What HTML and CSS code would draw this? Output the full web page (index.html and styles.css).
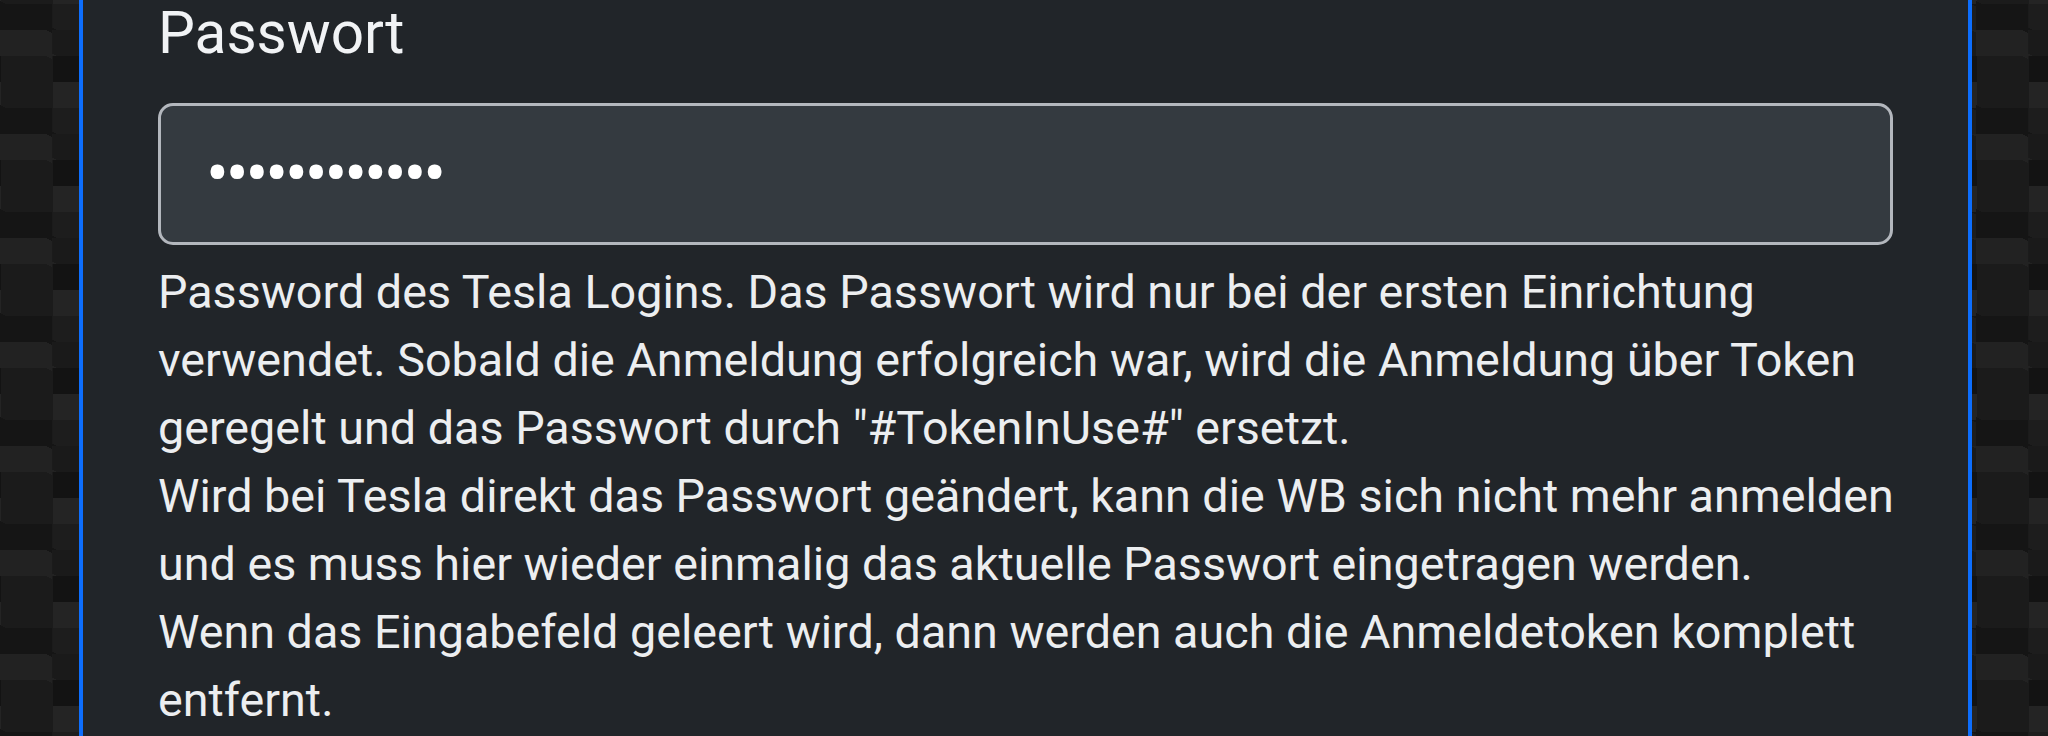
FILE: index.html
```html
<!DOCTYPE html>
<html lang="de">
<head>
<meta charset="utf-8">
<title>Passwort</title>
<link rel="stylesheet" href="styles.css">
</head>
<body>
<div class="page">
  <section class="panel">
    <label class="field-label" for="pw">Passwort</label>
    <input class="field-input" id="pw" type="password" value="geheim123456">
    <p class="field-help">Password des Tesla Logins. Das Passwort wird nur bei der ersten Einrichtung verwendet. Sobald die Anmeldung erfolgreich war, wird die Anmeldung über Token geregelt und das Passwort durch "#TokenInUse#" ersetzt.<br>Wird bei Tesla direkt das Passwort geändert, kann die WB sich nicht mehr anmelden und es muss hier wieder einmalig das aktuelle Passwort eingetragen werden.<br>Wenn das Eingabefeld geleert wird, dann werden auch die Anmeldetoken komplett entfernt.</p>
  </section>
</div>
</body>
</html>
```
FILE: styles.css
```css
html, body {
  margin: 0;
  padding: 0;
  height: 100%;
}
body {
  font-family: Roboto, "Liberation Sans", sans-serif;
  color: #eceef0;
  background-color: #131313;
  background:
    linear-gradient(27deg, #151515 26px, transparent 26px) 0 30px,
    linear-gradient(207deg, #151515 26px, transparent 26px) 52px 4px,
    linear-gradient(27deg, #222 26px, transparent 26px) 0 56px,
    linear-gradient(207deg, #222 26px, transparent 26px) 52px 30px,
    linear-gradient(90deg, #1b1b1b 52px, transparent 52px) 1px 4px,
    linear-gradient(#1d1d1d 25%, #1a1a1a 25%, #1a1a1a 50%, transparent 50%, transparent 75%, #242424 75%, #242424) 1px 4px;
  background-color: #131313;
  background-size: 104px 104px;
  overflow: hidden;
}
.page {
  padding-left: 79px;
  height: 736px;
}
.panel {
  box-sizing: border-box;
  width: 1893px;
  height: 736px;
  background: #212529;
  border-left: 4px solid #0d6efd;
  border-right: 4px solid #0d6efd;
  padding: 0 75px 0 75px;
  display: flex;
  flex-direction: column;
}
.field-label {
  font-size: 58.5px;
  line-height: 67px;
  color: #f1f3f5;
  margin-bottom: 36px;
}
.field-input {
  box-sizing: border-box;
  width: 100%;
  height: 142px;
  margin: 0;
  border: 3px solid #b3b7bd;
  border-radius: 15px;
  background: #343a40;
  color: #ffffff;
  font-family: Roboto, "Liberation Sans", sans-serif;
  font-size: 68px;
  letter-spacing: -3.2px;
  padding: 0 0 0 45px;
  outline: none;
}
.field-help {
  margin: 13px -20px 0 0;
  font-size: 46.7px;
  line-height: 68px;
  color: #eceef0;
}
```
